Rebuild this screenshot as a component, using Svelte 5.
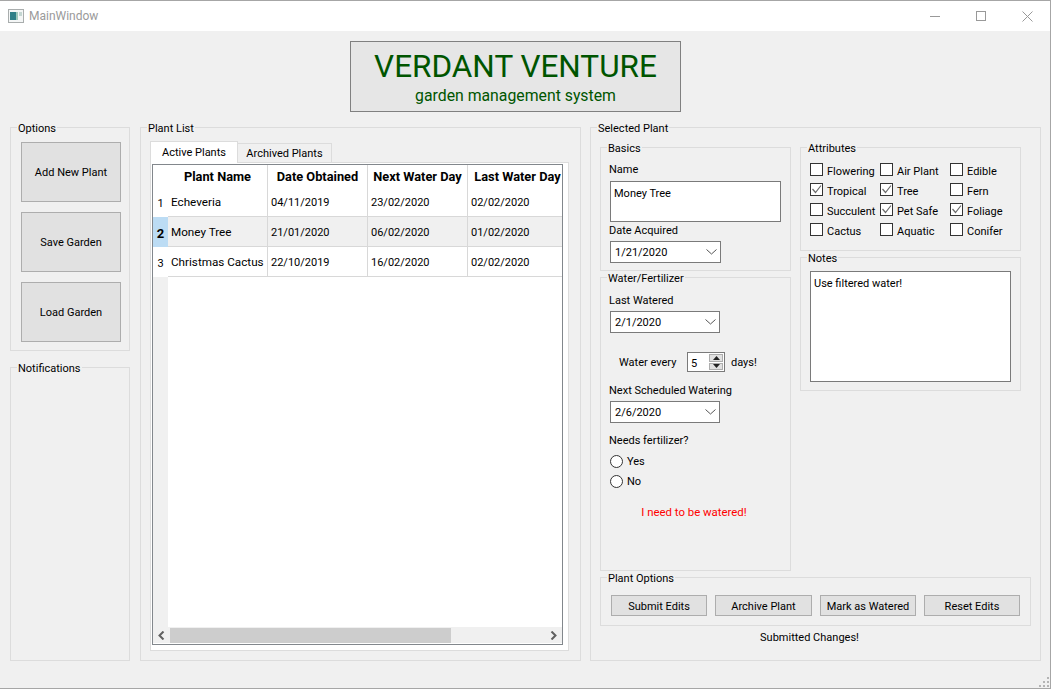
<script>
  const plants = [
    { name: 'Echeveria', obtained: '04/11/2019', next: '23/02/2020', last: '02/02/2020' },
    { name: 'Money Tree', obtained: '21/01/2020', next: '06/02/2020', last: '01/02/2020' },
    { name: 'Christmas Cactus', obtained: '22/10/2019', next: '16/02/2020', last: '02/02/2020' }
  ];
  const columns = ['Plant Name', 'Date Obtained', 'Next Water Day', 'Last Water Day'];
  const selectedRow = 1;

  const attributes = [
    { label: 'Flowering', checked: false },
    { label: 'Air Plant', checked: false },
    { label: 'Edible', checked: false },
    { label: 'Tropical', checked: true },
    { label: 'Tree', checked: true },
    { label: 'Fern', checked: false },
    { label: 'Succulent', checked: false },
    { label: 'Pet Safe', checked: true },
    { label: 'Foliage', checked: true },
    { label: 'Cactus', checked: false },
    { label: 'Aquatic', checked: false },
    { label: 'Conifer', checked: false }
  ];
  const plantButtons = ['Submit Edits', 'Archive Plant', 'Mark as Watered', 'Reset Edits'];
</script>

{#snippet combo(value, width)}
  <div class="combo" style="width: {width}px">
    <span class="combo-value">{value}</span>
    <svg width="11" height="6" viewBox="0 0 11 6"><path d="M0.5 0.5 L5.5 5 L10.5 0.5" fill="none" stroke="#555" /></svg>
  </div>
{/snippet}

<div class="window">
  <header class="titlebar">
    <svg class="app-icon" width="16" height="14" viewBox="0 0 16 14">
      <rect x="0.5" y="0.5" width="15" height="13" fill="#f4f6f6" stroke="#a9adad" />
      <rect x="2" y="3" width="6" height="8" fill="#2f7f88" />
      <rect x="8" y="3" width="2" height="8" fill="#9cc7ba" />
      <rect x="11" y="3" width="3" height="4" fill="#c4d6d2" />
    </svg>
    <span class="app-title">MainWindow</span>
    <div class="win-controls">
      <svg width="11" height="11" viewBox="0 0 11 11"><path d="M0 5.5 H10" stroke="#999" /></svg>
      <svg width="11" height="11" viewBox="0 0 11 11"><rect x="0.5" y="0.5" width="9" height="9" fill="none" stroke="#999" /></svg>
      <svg width="11" height="11" viewBox="0 0 11 11"><path d="M0.5 0.5 L10.5 10.5 M10.5 0.5 L0.5 10.5" stroke="#999" /></svg>
    </div>
  </header>

  <div class="content">
    <div class="banner">
      <div class="banner-title">VERDANT VENTURE</div>
      <div class="banner-sub">garden management system</div>
    </div>

    <div class="columns">
      <div class="left-col">
        <section class="group options">
          <span class="group-title">Options</span>
          <button class="big-btn">Add New Plant</button>
          <button class="big-btn">Save Garden</button>
          <button class="big-btn">Load Garden</button>
        </section>
        <section class="group notifications">
          <span class="group-title">Notifications</span>
        </section>
      </div>

      <section class="group plant-list">
        <span class="group-title">Plant List</span>
        <div class="tabs">
          <div class="tab active">Active Plants</div>
          <div class="tab">Archived Plants</div>
        </div>
        <div class="tab-pane">
          <div class="table-view">
            <div class="table-area">
              <div class="vhead">
                <div class="vhead-corner"></div>
                {#each plants as _, i}
                  <div class="vhead-cell" class:current={i === selectedRow}>{i + 1}</div>
                {/each}
              </div>
              <div class="cells">
                <div class="row head-row">
                  {#each columns as col}
                    <div class="cell head-cell">{col}</div>
                  {/each}
                </div>
                {#each plants as plant, i}
                  <div class="row" class:selected={i === selectedRow}>
                    <div class="cell name-cell">{plant.name}</div>
                    <div class="cell">{plant.obtained}</div>
                    <div class="cell">{plant.next}</div>
                    <div class="cell">{plant.last}</div>
                  </div>
                {/each}
              </div>
            </div>
            <div class="hscroll">
              <svg class="arrow" width="7" height="9" viewBox="0 0 7 9"><path d="M5.5 0.5 L1.5 4.5 L5.5 8.5" fill="none" stroke="#606060" stroke-width="2" /></svg>
              <div class="track"><div class="thumb"></div></div>
              <svg class="arrow" width="7" height="9" viewBox="0 0 7 9"><path d="M1.5 0.5 L5.5 4.5 L1.5 8.5" fill="none" stroke="#606060" stroke-width="2" /></svg>
            </div>
          </div>
        </div>
      </section>

      <section class="group selected-plant">
        <span class="group-title">Selected Plant</span>
        <div class="detail-cols">
          <div class="detail-left">
            <section class="group basics">
              <span class="group-title">Basics</span>
              <div class="label name-label">Name</div>
              <div class="name-input">Money Tree</div>
              <div class="label date-label">Date Acquired</div>
              {@render combo('1/21/2020', 111)}
            </section>
            <section class="group water">
              <span class="group-title">Water/Fertilizer</span>
              <div class="label watered-label">Last Watered</div>
              {@render combo('2/1/2020', 110)}
              <div class="every-row">
                <span class="every-text">Water every</span>
                <div class="spin">
                  <span class="spin-value">5</span>
                  <div class="spin-btns">
                    <div class="spin-btn"><svg width="7" height="4" viewBox="0 0 7 4"><path d="M3.5 0 L7 4 H0 Z" fill="#222" /></svg></div>
                    <div class="spin-btn"><svg width="7" height="4" viewBox="0 0 7 4"><path d="M0 0 H7 L3.5 4 Z" fill="#222" /></svg></div>
                  </div>
                </div>
                <span class="days-text">days!</span>
              </div>
              <div class="label next-label">Next Scheduled Watering</div>
              {@render combo('2/6/2020', 110)}
              <div class="label fert-label">Needs fertilizer?</div>
              <div class="radio-row yes"><span class="radio"></span><span class="radio-text">Yes</span></div>
              <div class="radio-row no"><span class="radio"></span><span class="radio-text">No</span></div>
              <div class="warning">I need to be watered!</div>
            </section>
          </div>
          <div class="detail-right">
            <section class="group attributes">
              <span class="group-title">Attributes</span>
              <div class="attr-grid">
                {#each attributes as attr}
                  <div class="check">
                    <span class="box">
                      {#if attr.checked}
                        <svg width="11" height="11" viewBox="0 0 11 11"><path d="M1.5 5 L4.5 8.5 L10 1.5" fill="none" stroke="#6a6a6a" stroke-width="1.2" /></svg>
                      {/if}
                    </span>
                    {attr.label}
                  </div>
                {/each}
              </div>
            </section>
            <section class="group notes">
              <span class="group-title">Notes</span>
              <div class="notes-input">Use filtered water!</div>
            </section>
          </div>
        </div>
        <section class="group plant-options">
          <span class="group-title">Plant Options</span>
          {#each plantButtons as label}
            <button class="small-btn">{label}</button>
          {/each}
        </section>
        <div class="status">Submitted Changes!</div>
      </section>
    </div>
  </div>

  <svg class="grip" width="11" height="11" viewBox="0 0 11 11">
    <g fill="#b4b4b4">
      <rect x="8" y="0" width="2" height="2" />
      <rect x="4" y="4" width="2" height="2" />
      <rect x="8" y="4" width="2" height="2" />
      <rect x="0" y="8" width="2" height="2" />
      <rect x="4" y="8" width="2" height="2" />
      <rect x="8" y="8" width="2" height="2" />
    </g>
  </svg>
</div>

<style>
  :global(body) {
    background: #fff;
  }

  .window {
    position: relative;
    width: 1050px;
    height: 687px;
    border-top: 1px solid #a6a6a6;
    border-right: 1px solid #a6a6a6;
    border-bottom: 1px solid #a6a6a6;
    background: #f0f0f0;
    font-family: Roboto, sans-serif;
    font-size: 11px;
    line-height: 14px;
    color: #000;
    overflow: hidden;
  }

  .titlebar {
    display: flex;
    align-items: center;
    height: 30px;
    background: #fff;
    padding-left: 8px;
  }

  .app-title {
    margin-left: 5px;
    font-size: 12px;
    color: #9a9a9a;
  }

  .win-controls {
    display: flex;
    gap: 35px;
    margin-left: auto;
    margin-right: 17px;
  }

  .banner {
    width: 331px;
    height: 71px;
    box-sizing: border-box;
    margin: 10px 0 0 350px;
    border: 1px solid #808080;
    background: #e6e6e6;
    color: #005500;
    text-align: center;
  }

  .banner-title {
    font-size: 31.5px;
    line-height: 36px;
    margin-top: 7px;
  }

  .banner-sub {
    font-size: 15.8px;
    line-height: 20px;
    margin-top: 1px;
  }

  .columns {
    display: flex;
    margin: 15px 0 0 10px;
    height: 534px;
  }

  .group {
    position: relative;
    box-sizing: border-box;
    border: 1px solid #dcdcdc;
  }

  .group-title {
    position: absolute;
    top: -6px;
    left: 6px;
    padding: 0 1px;
    background: #f0f0f0;
    white-space: nowrap;
  }

  .left-col {
    display: flex;
    flex-direction: column;
    gap: 16px;
    width: 120px;
  }

  .options {
    display: flex;
    flex-direction: column;
    gap: 10px;
    height: 224px;
    padding: 14px 0 0 10px;
  }

  .big-btn {
    width: 100px;
    height: 60px;
    padding: 2px 0 0;
    border: 1px solid #adadad;
    background: #e1e1e1;
    font: inherit;
  }

  .notifications {
    flex: 1;
  }

  .plant-list {
    width: 441px;
    margin-left: 10px;
    padding: 13px 0 0 9px;
  }

  .tabs {
    display: flex;
    align-items: flex-end;
    height: 21px;
    position: relative;
    z-index: 1;
  }

  .tab {
    box-sizing: border-box;
    height: 19px;
    padding-top: 3px;
    width: 94px;
    text-align: center;
    white-space: nowrap;
    border: 1px solid #dcdcdc;
    border-bottom: none;
    border-left: none;
  }

  .tab.active {
    width: 88px;
    height: 22px;
    padding-top: 4px;
    background: #fff;
    border-left: 1px solid #dcdcdc;
    margin-bottom: -1px;
  }

  .tab-pane {
    box-sizing: border-box;
    width: 419px;
    height: 489px;
    padding: 1px 5px 5px 1px;
    background: #fff;
    border: 1px solid #dcdcdc;
  }

  .table-view {
    box-sizing: border-box;
    display: flex;
    flex-direction: column;
    height: 100%;
    border: 1px solid #82878c;
  }

  .table-area {
    display: flex;
    flex: 1;
    min-height: 0;
    overflow: hidden;
  }

  .vhead {
    flex: none;
    width: 15px;
    background: #f0f0f0;
  }

  .vhead-corner {
    height: 22px;
    background: #fff;
  }

  .vhead-cell {
    height: 30px;
    padding-top: 10px;
    box-sizing: border-box;
    background: #fff;
    text-align: center;
  }

  .vhead-cell.current {
    background: #bcdcf4;
    font-weight: 700;
    font-size: 13px;
  }

  .cells {
    flex: 1;
    min-width: 0;
    overflow: hidden;
  }

  .row {
    display: flex;
    width: 400px;
    height: 30px;
    box-sizing: border-box;
    border-bottom: 1px solid #d8d8d8;
  }

  .row.selected {
    background: #f0f0f0;
  }

  .head-row {
    height: 22px;
    border-bottom: none;
  }

  .cell {
    flex: none;
    box-sizing: border-box;
    width: 100px;
    padding: 9px 0 0 3px;
    border-right: 1px solid #d8d8d8;
    white-space: nowrap;
  }

  .name-cell {
    padding-top: 8px;
    font-size: 11.7px;
  }

  .head-cell {
    padding: 5px 0 0;
    text-align: center;
    font-weight: 700;
    font-size: 12.8px;
  }

  .hscroll {
    display: flex;
    align-items: center;
    flex: none;
    height: 16px;
    margin-bottom: 1px;
    background: #f0f0f0;
  }

  .arrow {
    flex: none;
    margin: 0 5px;
  }

  .track {
    flex: 1;
    height: 15px;
  }

  .thumb {
    width: 281px;
    height: 15px;
    background: #cdcdcd;
  }

  .selected-plant {
    width: 451px;
    margin-left: 9px;
    padding: 19px 0 0 9px;
  }

  .detail-cols {
    display: flex;
    gap: 9px;
    height: 424px;
  }

  .detail-left,
  .detail-right {
    display: flex;
    flex-direction: column;
    gap: 6px;
  }

  .detail-left {
    width: 191px;
  }

  .detail-right {
    width: 221px;
  }

  .basics {
    height: 124px;
    padding-left: 8px;
  }

  .water {
    height: 294px;
    padding-left: 8px;
  }

  .label {
    padding-top: 1px;
    margin-bottom: -1px;
  }

  .name-label { margin-top: 14px; }
  .date-label { margin-top: 1px; }
  .watered-label { margin-top: 15px; }
  .next-label { margin-top: 11px; }
  .fert-label { margin-top: 10px; }

  .name-input {
    box-sizing: border-box;
    width: 171px;
    height: 41px;
    margin: 5px 0 0 1px;
    padding: 5px 3px;
    border: 1px solid #7a7a7a;
    background: #fff;
  }

  .combo {
    display: flex;
    align-items: center;
    justify-content: space-between;
    box-sizing: border-box;
    height: 22px;
    margin: 4px 0 0 1px;
    padding: 0 3px 0 4px;
    border: 1px solid #7a7a7a;
    background: #fff;
  }

  .combo-value,
  .days-text,
  .every-text,
  .radio-text {
    margin-top: 2px;
  }

  .every-row {
    display: flex;
    align-items: center;
    gap: 6px;
    height: 20px;
    margin: 19px 0 0 10px;
  }

  .every-text {
    width: 62px;
    white-space: nowrap;
  }

  .spin {
    display: flex;
    justify-content: space-between;
    box-sizing: border-box;
    width: 38px;
    height: 20px;
    padding: 1px;
    border: 1px solid #7a7a7a;
    background: #fff;
  }

  .spin-value {
    margin: 3px 0 0 2px;
  }

  .spin-btns {
    display: flex;
    flex-direction: column;
    gap: 1px;
    width: 14px;
  }

  .spin-btn {
    flex: 1;
    display: flex;
    align-items: center;
    justify-content: center;
    border: 1px solid #adadad;
    background: #e1e1e1;
  }

  .radio-row {
    display: flex;
    align-items: center;
    gap: 4px;
    height: 14px;
    margin-left: 1px;
  }

  .radio-row.yes { margin-top: 7px; }
  .radio-row.no { margin-top: 6px; }

  .radio {
    box-sizing: border-box;
    width: 13px;
    height: 13px;
    border: 1px solid #333;
    border-radius: 50%;
    background: #fff;
  }

  .warning {
    width: 170px;
    margin-top: 17px;
    text-align: center;
    font-size: 11.4px;
    color: #ff0000;
  }

  .attributes {
    height: 104px;
  }

  .attr-grid {
    display: grid;
    grid-template-columns: repeat(3, 70px);
    grid-auto-rows: 20px;
    padding: 15px 0 0 9px;
  }

  .check {
    display: flex;
    align-items: flex-start;
    gap: 4px;
    white-space: nowrap;
    line-height: 17px;
  }

  .box {
    flex: none;
    box-sizing: border-box;
    display: flex;
    align-items: center;
    justify-content: center;
    width: 13px;
    height: 13px;
    border: 1px solid #333;
    background: #fff;
  }

  .notes {
    height: 134px;
    padding: 13px 0 0 9px;
  }

  .notes-input {
    box-sizing: border-box;
    width: 201px;
    height: 111px;
    padding: 5px 3px;
    border: 1px solid #7a7a7a;
    background: #fff;
  }

  .plant-options {
    display: flex;
    gap: 8px;
    width: 431px;
    height: 49px;
    margin-top: 6px;
    padding: 17px 0 0 10px;
  }

  .small-btn {
    width: 96px;
    height: 21px;
    padding: 2px 0 0;
    border: 1px solid #adadad;
    background: #e1e1e1;
    font: inherit;
  }

  .small-btn:nth-of-type(2) {
    width: 97px;
  }

  .status {
    width: 419px;
    margin-top: 5px;
    text-align: center;
  }

  .grip {
    position: absolute;
    right: 0;
    bottom: 0;
  }
</style>
